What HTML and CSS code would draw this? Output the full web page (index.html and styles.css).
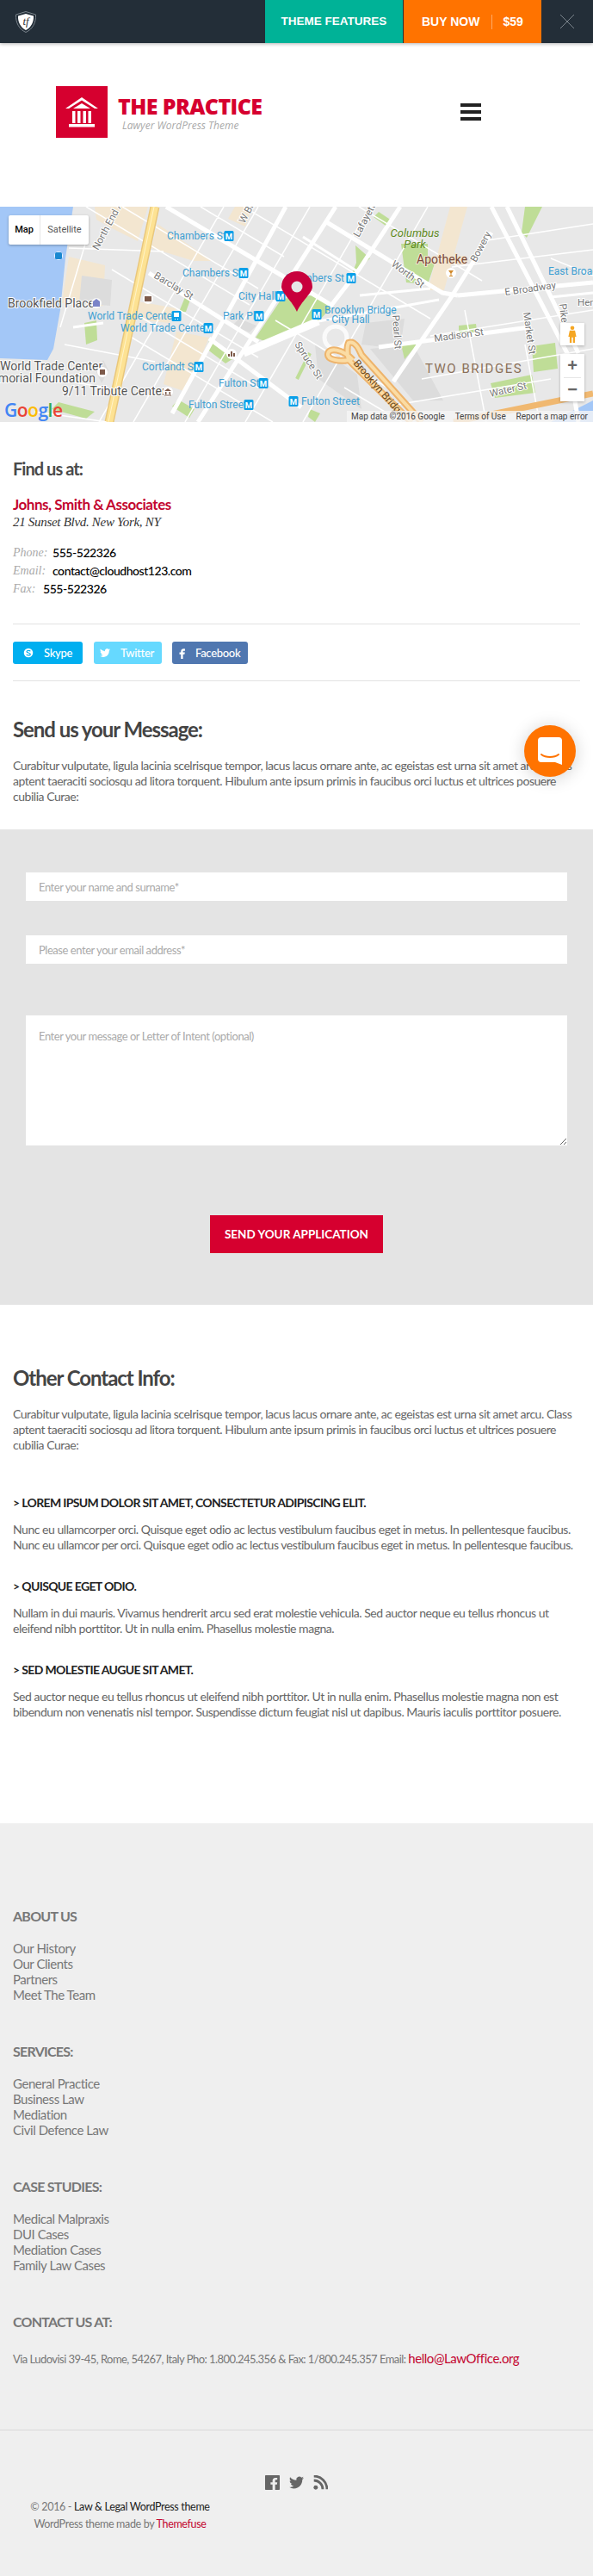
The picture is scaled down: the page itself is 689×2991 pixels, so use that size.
FILE: index.html
```html
<!DOCTYPE html>
<html lang="en">
<head>
    <meta charset="UTF-8">
    <title>Contact - The Practice</title>
    <link rel="stylesheet" href="styles.css">
</head>
<body>
    <!-- Theme preview bar -->
    <div class="topbar">
        <svg class="shield" viewBox="0 0 24 25" width="24" height="25">
            <path d="M12 .5 23.5 4C24 13 20 21 12 24.5 4 21 0 13 .5 4Z" fill="none" stroke="#7b848c" stroke-width="1"/>
            <path d="M12 3 21 5.500C21.500 12.500 18 19 12 22 6 19 2.500 12.500 3 5.500Z" fill="#fff"/>
            <text x="12" y="16" class="shield-text">tf</text>
        </svg>
        <a class="bar-link bar-features">THEME FEATURES</a>
        <a class="bar-link bar-buy"><span class="buy-now">BUY NOW</span><span class="buy-price">$59</span></a>
        <svg class="bar-close" viewBox="0 0 16 16" width="16" height="16">
            <path d="M0 0 16 16M16 0 0 16" stroke="#7b848c" stroke-width="1" fill="none"/>
        </svg>
    </div>

    <!-- Logo and menu -->
    <header class="header">
        <div class="logo-mark">
            <svg viewBox="0 0 60 60" width="60" height="60">
                <path d="M30 13 49 26H45L30 16.500 15 26H11Z" fill="#fff"/>
                <path d="M30 20 40 26H20Z" fill="#fff"/>
                <path d="M19 29h3.500v14H19zM25 29h3.500v14H25zM31.500 29H35v14h-3.500zM37.500 29H41v14h-3.500zM15 44h30v3.500H15z" fill="#fff"/>
            </svg>
        </div>
        <div class="logo-text">
            <div class="logo-title">THE PRACTICE</div>
            <div class="logo-sub">Lawyer WordPress Theme</div>
        </div>
        <div class="burger"><span></span><span></span><span></span></div>
    </header>

    <!-- Map -->
    <div class="map">
        <svg class="map-svg" viewBox="0 0 689 250" width="689" height="250">
            <defs>
                <g id="m-badge">
                    <rect x="-5.500" y="-6" width="11" height="12" rx="1.500" fill="#0a9fe8"/>
                    <text y="3.500" class="m-letter">M</text>
                </g>
            </defs>
            <rect width="689" height="250" fill="#e8e8e8"/>

            <!-- water -->
            <path d="M0 0H85L76 60 70 120 62 165 55 178 0 176Z" fill="#a3c7f7"/>
            <path d="M689 225V250H640Z" fill="#a3c7f7"/>

            <!-- land use -->
            <g fill="#f3e6d0">
                <path d="M183 20 247 63 225 63 176 48Z"/>
                <path d="M273 0H293L285 23 265 14Z"/>
                <path d="M110 0H172L160 40 130 25 112 15Z"/>
                <path d="M80 58 122 68 120 115 72 112Z"/>
                <path d="M205 145 243 152 216 215 190 206Z"/>
                <path d="M523 0H543L516 97 497 97Z"/>
                <path d="M160 110 205 118 196 135 150 130Z"/>
            </g>
            <g fill="#dcdcdc">
                <path d="M95 80 130 85 128 115 92 112Z"/>
                <path d="M278 130 298 138 290 146 270 138Z"/>
                <path d="M425 135 470 130 465 165 420 160Z"/>
                <path d="M366 160 415 195 420 235 370 200Z"/>
                <path d="M430 165 480 160 515 225 480 225Z"/>
                <path d="M120 178 126 190 118 205 112 192Z"/>
            </g>
            <g fill="#bfdd97">
                <path d="M327 107 297 152 307 156 370 133 387 115 363 103Z"/>
                <path d="M466 43H497V60L505 66 497 90 472 88Z"/>
                <path d="M413 45 430 60 408 80 414 65Z"/>
                <path d="M244 153 273 175 262 182 240 165Z"/>
                <path d="M207 224 226 235 220 245 200 232Z"/>
                <path d="M466 160H485L470 177Z"/>
                <path d="M533 138 553 136 555 150 533 152Z"/>
                <path d="M618 162 645 158 648 188 620 192Z"/>
                <path d="M570 205 618 195 622 216 575 222Z"/>
                <path d="M68 227 110 238 100 246 60 235Z"/>
                <path d="M98 135 112 132 113 155 100 160Z"/>
                <path d="M215 105 224 100 216 122 208 122Z"/>
                <path d="M440 6 455 16 448 22 434 12Z"/>
                <path d="M610 0H630L612 36 606 30Z"/>
                <path d="M360 235 372 240 366 250 358 244Z"/>
            </g>
            <path d="M345 200 360 170" stroke="#bfdd97" stroke-width="4" fill="none"/>

            <!-- small streets -->
            <path class="road-thin" d="M417 0 560 86M283 0 500 130M233 0 330 58M142 0 300 95M100 0 290 114M130 73 300 175M160 126 300 210M150 150 317 250M320 132 460 216M400 210 467 250M300 0 155 250M360 0 215 250M430 0 285 250M497 0 352 250M260 0 115 250M500 150 689 120M460 230 640 200M560 40 689 20M610 160 625 240M490 200 689 165M525 70 689 50M80 48 190 52M40 238 125 250M100 40 70 140M75 160 180 180M60 200 125 210M540 120 565 250M640 60 689 80"/>
            <path class="road-mid" d="M640 105 689 100M85 140 120 135M352 35 415 75M418 103 500 95M370 133 510 108"/>
            <!-- main streets -->
            <path class="road-main" d="M193 0 383 113M378 17 514 100 532 103M173 77 300 157M243 153 350 233M332 0 200 240M390 0 283 167 230 250M465 0 417 73 383 117M571 30 523 107 457 203M532 103 689 88M440 163 615 140M571 0 659 170 672 250M589 0 672 170"/>
            <path class="road-wide" d="M370 133 283 170"/>
            <circle cx="390" cy="152" r="13" fill="none" stroke="#fafafa" stroke-width="5"/>

            <!-- highway -->
            <path d="M180 0 127 250" stroke="#e9c77c" stroke-width="11" fill="none"/>
            <path d="M180 0 127 250" stroke="#fde293" stroke-width="8" fill="none"/>
            <path d="M179 0 126 250" stroke="#fff3c9" stroke-width="1" fill="none"/>
            <path d="M527 250 689 217" stroke="#f0b870" stroke-width="7" fill="none"/>
            <path class="ramp-edge" d="M478 250 405 178C395 180 380 178 381 171 382 163 398 165 410 178M490 250 420 172C415 160 410 156 405 158 403 162 403 172 405 178"/>
            <path class="ramp-fill" d="M478 250 405 178C395 180 380 178 381 171 382 163 398 165 410 178M490 250 420 172C415 160 410 156 405 158 403 162 403 172 405 178"/>

            <!-- transit labels -->
            <g class="label-blue">
                <text x="194" y="38">Chambers St</text>
                <text x="212" y="81">Chambers St</text>
                <text x="400" y="87" text-anchor="end">Chambers St</text>
                <text x="277" y="108">City Hall</text>
                <text x="377" y="124">Brooklyn Bridge</text>
                <text x="379" y="135">- City Hall</text>
                <text x="259" y="131">Park Pl</text>
                <text x="102" y="131">World Trade Center</text>
                <text x="140" y="145">World Trade Center</text>
                <text x="165" y="190">Cortlandt St</text>
                <text x="254" y="209">Fulton St</text>
                <text x="219" y="234">Fulton Street</text>
                <text x="350" y="230">Fulton Street</text>
                <text x="637" y="79">East Broadway</text>
            </g>
            <use href="#m-badge" x="266" y="34"/>
            <use href="#m-badge" x="283" y="77"/>
            <use href="#m-badge" x="408" y="83"/>
            <use href="#m-badge" x="326" y="104"/>
            <use href="#m-badge" x="368" y="125"/>
            <use href="#m-badge" x="301" y="127"/>
            <use href="#m-badge" x="242" y="141"/>
            <use href="#m-badge" x="231" y="186"/>
            <use href="#m-badge" x="306" y="205"/>
            <use href="#m-badge" x="289" y="230"/>
            <use href="#m-badge" x="341" y="226"/>
            <rect x="199.500" y="121" width="11" height="12" rx="1.500" fill="#0a9fe8"/>
            <path d="M202 123h6v5h-6zM203 130h1v1h-1zM206 130h1v1h-1z" fill="#fff"/>

            <!-- place labels -->
            <g class="label-dark">
                <text x="9" y="117">Brookfield Place</text>
                <text x="0" y="190">World Trade Center</text>
                <text x="111" y="204" text-anchor="end">Memorial Foundation</text>
                <text x="72" y="219">9/11 Tribute Center</text>
            </g>
            <g class="label-street">
                <text transform="translate(114 51) rotate(-62)">North End Ave</text>
                <text transform="translate(284 20) rotate(-62)">W Broadway</text>
                <text transform="translate(417 36) rotate(-62)">Lafayette</text>
                <text transform="translate(553 65) rotate(-62)">Bowery</text>
                <text transform="translate(454 68) rotate(37)">Worth St</text>
                <text transform="translate(178 82) rotate(31)">Barclay St</text>
                <text transform="translate(342 160) rotate(57)">Spruce St</text>
                <text transform="translate(456 126) rotate(86)">Pearl St</text>
                <text transform="translate(608 123) rotate(82)">Market St</text>
                <text transform="translate(650 113) rotate(84)">Pike</text>
                <text transform="translate(570 221) rotate(-13)">Water St</text>
                <text transform="translate(505 157) rotate(-8)">Madison St</text>
                <text transform="translate(587 103) rotate(-8)">E Broadway</text>
                <text x="671" y="115">Henry</text>
            </g>
            <text class="label-ramp" transform="translate(410 182) rotate(49)">Brooklyn Bridge</text>
            <text class="label-park" x="482" y="35" text-anchor="middle">Columbus</text>
            <text class="label-park" x="482" y="48" text-anchor="middle">Park</text>
            <text class="label-shop" x="484" y="66">Apotheke</text>
            <text class="label-area" x="494" y="193">TWO BRIDGES</text>

            <!-- point markers -->
            <circle cx="68" cy="57" r="5" fill="#fff" opacity=".8"/>
            <rect x="64" y="53" width="8" height="8" rx="1.500" fill="#1a88d0"/>
            <circle cx="112" cy="112" r="6" fill="#fff" opacity=".8"/>
            <path d="M112 107 116 110V116H108V110Z" fill="#7a84c8"/>
            <circle cx="172" cy="107" r="6" fill="#fff"/>
            <path d="M168 104h8v6h-8z" fill="#7d5a4a"/>
            <circle cx="269" cy="171" r="6" fill="#fff"/>
            <path d="M265 174v-3h2v3zM268 174v-6h2v6zM271 174v-4h2v4z" fill="#7d5a4a"/>
            <circle cx="119" cy="192" r="6" fill="#fff"/>
            <rect x="116" y="189" width="6" height="6" fill="#7d5a4a"/>
            <circle cx="195" cy="215" r="6" fill="#fff"/>
            <path d="M195 211 199 214H191ZM192 215h1.500v3H192zM196.500 215H198v3h-1.500zM191 218.500h8v1h-8z" fill="#7d5a4a"/>
            <circle cx="524" cy="77" r="6" fill="#fff"/>
            <path d="M521 74h6l-2.500 3.500v2.500h1.500v1h-4v-1h1.500v-2.500Z" fill="#d18a2c"/>

            <!-- pin -->
            <path d="M345 122C340 110 327 100 327 93A18 18 0 1 1 363 93C363 100 350 110 345 122Z" fill="#c8003c"/>
            <circle cx="345" cy="93" r="6.500" fill="#e6e6e6"/>

            <text class="google" x="5" y="244"><tspan fill="#4285f4">G</tspan><tspan fill="#ea4335">o</tspan><tspan fill="#fbbc05">o</tspan><tspan fill="#4285f4">g</tspan><tspan fill="#34a853">l</tspan><tspan fill="#ea4335">e</tspan></text>
        </svg>

        <div class="map-type"><span class="map-type-on">Map</span><span class="map-type-off">Satellite</span></div>
        <div class="pegman">
            <svg viewBox="0 0 12 26" width="12" height="26">
                <circle cx="6" cy="3.500" r="3" fill="#f5a623"/>
                <path d="M2 7.500H10L12 17H10V26H7V18H5V26H2V17H0Z" fill="#f5a623"/>
            </svg>
        </div>
        <div class="map-zoom"><span>+</span><i></i><span>&minus;</span></div>
        <div class="map-credit"><span>Map data &copy;2016 Google</span><span>Terms of Use</span><span>Report a map error</span></div>
    </div>

    <!-- Contact details -->
    <section class="find-us">
        <h3>Find us at:</h3>
        <div class="company">Johns, Smith &amp; Associates</div>
        <div class="address">21 Sunset Blvd. New York, NY</div>
        <ul class="contact-lines">
            <li><em>Phone:</em><span class="wide">555-522326</span></li>
            <li><em>Email:</em><span class="wide">contact@cloudhost123.com</span></li>
            <li><em>Fax:</em><span>555-522326</span></li>
        </ul>
        <div class="social-row">
            <a class="social skype">
                <svg viewBox="0 0 24 24" width="14" height="14">
                    <path d="M12 3A9 9 0 0 1 21 12 9 9 0 0 1 12 21 9 9 0 0 1 3 12 9 9 0 0 1 12 3Z" fill="#fff"/>
                    <path d="M16 9C15 7 9 6.500 8.500 9.500 8.500 12.500 16 11.500 16 15 15 18 9 17 8 15" fill="none" stroke="#00aff0" stroke-width="2"/>
                </svg>
                Skype
            </a>
            <a class="social twitter">
                <svg viewBox="0 0 24 24" width="12" height="12">
                    <path fill="#fff" d="M23.953 4.570a10 10 0 01-2.825.775 4.958 4.958 0 002.163-2.723c-.951.555-2.005.959-3.127 1.184a4.920 4.920 0 00-8.384 4.482C7.690 8.095 4.067 6.130 1.640 3.162a4.822 4.822 0 00-.666 2.475c0 1.710.870 3.213 2.188 4.096a4.904 4.904 0 01-2.228-.616v.060a4.923 4.923 0 003.946 4.827 4.996 4.996 0 01-2.212.085 4.936 4.936 0 004.604 3.417 9.867 9.867 0 01-6.102 2.105c-.390 0-.779-.023-1.170-.067a13.995 13.995 0 007.557 2.209c9.053 0 13.998-7.496 13.998-13.985 0-.210 0-.420-.015-.630A9.935 9.935 0 0024 4.590z"/>
                </svg>
                Twitter
            </a>
            <a class="social facebook">
                <svg viewBox="0 0 24 24" width="14" height="14">
                    <path fill="#fff" d="M14 8h3V4h-3c-2.800 0-5 2.200-5 5v2H6v4h3v9h4v-9h3l1-4h-4V9c0-.6.4-1 1-1z"/>
                </svg>
                Facebook
            </a>
        </div>
    </section>

    <section class="message">
        <h2>Send us your Message:</h2>
        <p>Curabitur vulputate, ligula lacinia scelrisque tempor, lacus lacus ornare ante, ac egeistas est urna sit amet arcu. Class aptent taeraciti sociosqu ad litora torquent. Hibulum ante ipsum primis in faucibus orci luctus et ultrices posuere cubilia Curae:</p>
    </section>

    <!-- Form -->
    <form class="contact-form">
        <input type="text" placeholder="Enter your name and surname*">
        <input type="text" class="email-field" placeholder="Please enter your email address*">
        <textarea placeholder="Enter your message or Letter of Intent (optional)"></textarea>
        <button type="button">SEND YOUR APPLICATION</button>
    </form>

    <section class="other-info">
        <h2>Other Contact Info:</h2>
        <p class="intro">Curabitur vulputate, ligula lacinia scelrisque tempor, lacus lacus ornare ante, ac egeistas est urna sit amet arcu. Class aptent taeraciti sociosqu ad litora torquent. Hibulum ante ipsum primis in faucibus orci luctus et ultrices posuere cubilia Curae:</p>
        <h4>&gt; Lorem ipsum dolor sit amet, consectetur adipiscing elit.</h4>
        <p>Nunc eu ullamcorper orci. Quisque eget odio ac lectus vestibulum faucibus eget in metus. In pellentesque faucibus. Nunc eu ullamcor per orci. Quisque eget odio ac lectus vestibulum faucibus eget in metus. In pellentesque faucibus.</p>
        <h4>&gt; Quisque eget odio.</h4>
        <p>Nullam in dui mauris. Vivamus hendrerit arcu sed erat molestie vehicula. Sed auctor neque eu tellus rhoncus ut eleifend nibh porttitor. Ut in nulla enim. Phasellus molestie magna.</p>
        <h4>&gt; Sed molestie augue sit amet.</h4>
        <p>Sed auctor neque eu tellus rhoncus ut eleifend nibh porttitor. Ut in nulla enim. Phasellus molestie magna non est bibendum non venenatis nisl tempor. Suspendisse dictum feugiat nisl ut dapibus. Mauris iaculis porttitor posuere.</p>
    </section>

    <!-- Footer -->
    <footer class="footer">
        <div class="footer-top">
            <div class="footer-col">
                <h5>About us</h5>
                <a>Our History</a>
                <a>Our Clients</a>
                <a>Partners</a>
                <a>Meet The Team</a>
            </div>
            <div class="footer-col">
                <h5>Services:</h5>
                <a>General Practice</a>
                <a>Business Law</a>
                <a>Mediation</a>
                <a>Civil Defence Law</a>
            </div>
            <div class="footer-col">
                <h5>Case studies:</h5>
                <a>Medical Malpraxis</a>
                <a>DUI Cases</a>
                <a>Mediation Cases</a>
                <a>Family Law Cases</a>
            </div>
            <div class="footer-col">
                <h5>Contact us at:</h5>
                <p class="footer-address">Via Ludovisi 39-45, Rome, 54267, Italy Pho: 1.800.245.356 &amp; Fax: 1/800.245.357 Email: <a class="footer-mail">hello@LawOffice.org</a></p>
            </div>
        </div>
        <div class="footer-bottom">
            <div class="footer-icons">
                <svg viewBox="0 0 24 24" width="17" height="17">
                    <path fill="#666" d="M1 0h22a1 1 0 011 1v22a1 1 0 01-1 1h-6.500v-9h3l.5-3.500h-3.500V9c0-1 .5-1.700 1.800-1.700H20V4.200h-3c-3 0-4.800 1.800-4.800 4.500v2.800H9V15h3.200v9H1a1 1 0 01-1-1V1a1 1 0 011-1z"/>
                </svg>
                <svg viewBox="0 0 24 24" width="17" height="17">
                    <path fill="#666" d="M23.953 4.570a10 10 0 01-2.825.775 4.958 4.958 0 002.163-2.723c-.951.555-2.005.959-3.127 1.184a4.920 4.920 0 00-8.384 4.482C7.690 8.095 4.067 6.130 1.640 3.162a4.822 4.822 0 00-.666 2.475c0 1.710.870 3.213 2.188 4.096a4.904 4.904 0 01-2.228-.616v.060a4.923 4.923 0 003.946 4.827 4.996 4.996 0 01-2.212.085 4.936 4.936 0 004.604 3.417 9.867 9.867 0 01-6.102 2.105c-.390 0-.779-.023-1.170-.067a13.995 13.995 0 007.557 2.209c9.053 0 13.998-7.496 13.998-13.985 0-.210 0-.420-.015-.630A9.935 9.935 0 0024 4.590z"/>
                </svg>
                <svg viewBox="0 0 24 24" width="17" height="17">
                    <circle cx="4" cy="20" r="3.500" fill="#666"/>
                    <path d="M1 8.500A14.500 14.500 0 0 1 15.500 23M1 1.500A21.500 21.500 0 0 1 22.500 23" fill="none" stroke="#666" stroke-width="4"/>
                </svg>
            </div>
            <div class="copyright">
                <div>&copy; 2016 - <span class="dark">Law &amp; Legal WordPress theme</span></div>
                <div>WordPress theme made by <span class="red">Themefuse</span></div>
            </div>
        </div>
    </footer>

    <!-- Chat launcher -->
    <div class="chat">
        <svg viewBox="0 0 28 32" width="28" height="32">
            <path d="M4 0H24A4 4 0 0 1 28 4V32L20 29H4A4 4 0 0 1 0 25V4A4 4 0 0 1 4 0Z" fill="#fff"/>
            <path d="M4 20C9 24 19 24 24 20" fill="none" stroke="#ff7300" stroke-width="2" stroke-linecap="round"/>
        </svg>
    </div>
</body>
</html>
```

FILE: styles.css
```css
* {
    box-sizing: border-box;
}

body {
    margin: 0;
    background: #fff;
    color: #666;
    font-family: Lato, "Open Sans", sans-serif;
    font-size: 14px;
    line-height: 18px;
    letter-spacing: -0.47px;
    position: relative;
}

/* Top bar */
.topbar {
    display: flex;
    align-items: center;
    height: 50px;
    background: #232e38;
    box-shadow: 0 1px 4px rgba(0, 0, 0, 0.3);
    position: relative;
    letter-spacing: 0;
}

.shield {
    margin-left: 18px;
    margin-right: 266px;
}

.shield-text {
    font-family: "Liberation Serif", serif;
    font-style: italic;
    font-size: 13px;
    fill: #333;
    text-anchor: middle;
}

.bar-link {
    display: flex;
    align-items: center;
    width: 160px;
    height: 50px;
    color: #fff;
    font-family: "Liberation Sans", Arial, sans-serif;
    font-size: 14px;
    font-weight: bold;
}

.bar-features {
    background: #00b297;
    margin-right: 1px;
    justify-content: center;
    font-size: 13.500px;
}

.bar-buy {
    background: #ff7300;
    padding-left: 21px;
}

.buy-now {
    padding-right: 14px;
    border-right: 1px solid #ffab66;
    height: 17px;
    line-height: 17px;
}

.buy-price {
    padding-left: 12px;
}

.bar-close {
    margin-left: 22px;
}

/* Header */
.header {
    display: flex;
    height: 190px;
    padding: 50px 0 0 65px;
    letter-spacing: 0;
}

.logo-mark {
    width: 60px;
    height: 60px;
    background: #d6002f;
}

.logo-text {
    margin-left: 12px;
    padding-top: 8px;
    width: 180px;
}

.logo-title {
    font-family: "Open Sans", sans-serif;
    font-weight: 800;
    font-size: 25px;
    line-height: 30px;
    color: #d6002f;
    letter-spacing: -0.6px;
    white-space: nowrap;
}

.logo-sub {
    margin-left: 5px;
    font-family: "Open Sans", sans-serif;
    font-style: italic;
    font-size: 12px;
    line-height: 16px;
    color: #aaa;
    white-space: nowrap;
}

.burger {
    margin-left: 218px;
    margin-top: 20px;
    display: flex;
    flex-direction: column;
    gap: 4px;
    width: 24px;
}

.burger span {
    height: 4px;
    background: #222;
}

/* Map */
.map {
    position: relative;
    height: 250px;
    overflow: hidden;
    letter-spacing: 0;
}

.map-svg {
    display: block;
}

.road-thin,
.road-mid,
.road-main,
.road-wide {
    fill: none;
    stroke: #fff;
}

.road-thin { stroke-width: 1.5; }
.road-mid { stroke-width: 3; }
.road-main { stroke-width: 5; }
.road-wide { stroke-width: 9; }

.ramp-edge {
    fill: none;
    stroke: #eeb46c;
    stroke-width: 8;
}

.ramp-fill {
    fill: none;
    stroke: #fbdca4;
    stroke-width: 4;
}

.m-letter {
    font-family: Roboto, sans-serif;
    font-size: 9.500px;
    font-weight: bold;
    fill: #fff;
    text-anchor: middle;
}

.label-blue text {
    font-family: Roboto, sans-serif;
    font-size: 12px;
    fill: #3f9fd3;
}

.label-dark text {
    font-family: Roboto, sans-serif;
    font-size: 14px;
    fill: #555;
    stroke: #fff;
    stroke-width: 2px;
    paint-order: stroke;
}

.label-street text {
    font-family: Roboto, sans-serif;
    font-size: 11.500px;
    fill: #777;
    stroke: #fff;
    stroke-width: 2px;
    paint-order: stroke;
}

.label-ramp {
    font-family: Roboto, sans-serif;
    font-size: 12px;
    fill: #6b4a22;
}

.label-park {
    font-family: Roboto, sans-serif;
    font-style: italic;
    font-size: 13px;
    fill: #5e8a1c;
}

.label-shop {
    font-family: Roboto, sans-serif;
    font-size: 14px;
    fill: #7a4a3a;
    stroke: #f3e6d0;
    stroke-width: 2px;
    paint-order: stroke;
}

.label-area {
    font-family: Roboto, sans-serif;
    font-size: 15px;
    letter-spacing: 1.500px;
    fill: #8b7059;
}

.google {
    font-family: "Open Sans", sans-serif;
    font-size: 21px;
    font-weight: 600;
    letter-spacing: -0.5px;
}

.map-type {
    position: absolute;
    left: 10px;
    top: 10px;
    display: flex;
    height: 34px;
    background: #fff;
    border-radius: 2px;
    box-shadow: 0 1px 3px rgba(0, 0, 0, 0.3);
    font-family: Roboto, sans-serif;
    font-size: 11px;
    line-height: 34px;
}

.map-type-on {
    width: 37px;
    text-align: center;
    color: #000;
    font-weight: 500;
    border-right: 1px solid #e6e6e6;
}

.map-type-off {
    width: 56px;
    text-align: center;
    color: #565656;
}

.pegman {
    position: absolute;
    left: 651px;
    top: 135px;
    width: 28px;
    height: 26px;
    background: #fff;
    display: flex;
    align-items: center;
    justify-content: center;
    box-shadow: 0 1px 3px rgba(0, 0, 0, 0.25);
}

.pegman svg {
    height: 20px;
}

.map-zoom {
    position: absolute;
    left: 651px;
    top: 171px;
    width: 28px;
    height: 55px;
    background: #fff;
    box-shadow: 0 1px 3px rgba(0, 0, 0, 0.25);
    display: flex;
    flex-direction: column;
    font-family: "Liberation Sans", sans-serif;
    font-size: 20px;
    font-weight: bold;
    color: #666;
    text-align: center;
    line-height: 27px;
}

.map-zoom span {
    height: 27px;
}

.map-zoom i {
    display: block;
    height: 1px;
    margin: 0 4px;
    background: #e6e6e6;
}

.map-credit {
    position: absolute;
    right: 0;
    bottom: 0;
    height: 13px;
    width: 286px;
    padding: 0 6px 0 5px;
    display: flex;
    justify-content: space-between;
    background: rgba(245, 245, 245, 0.8);
    font-family: Roboto, sans-serif;
    font-size: 10px;
    line-height: 13px;
    color: #444;
}

/* Find us */
.find-us {
    padding: 42px 15px 0;
}

h3 {
    margin: 0;
    font-size: 20px;
    line-height: 24px;
    letter-spacing: -0.95px;
    color: #4a4a4a;
    font-weight: bold;
}

.company {
    margin-top: 19px;
    font-size: 17px;
    line-height: 22px;
    font-weight: bold;
    color: #c3062f;
}

.address {
    font-family: "Liberation Serif", serif;
    font-style: italic;
    font-size: 15px;
    line-height: 18px;
    letter-spacing: -0.3px;
    color: #333;
}

.contact-lines {
    list-style: none;
    margin: 16px 0 0;
    padding: 0 0 30px;
    border-bottom: 1px solid #e2e2e2;
}

.contact-lines li {
    display: flex;
    height: 21px;
    line-height: 21px;
    color: #000;
    font-size: 14px;
    font-weight: 500;
    letter-spacing: -0.45px;
}

.contact-lines em {
    width: 35px;
    font-family: "Liberation Serif", serif;
    font-size: 14px;
    font-weight: normal;
    letter-spacing: 0;
    color: #aaa;
}

.contact-lines .wide {
    margin-left: 11px;
}

.social-row {
    display: flex;
    gap: 13px;
    padding: 20px 0 19px;
    border-bottom: 1px solid #e2e2e2;
}

.social {
    display: flex;
    align-items: center;
    height: 26px;
    border-radius: 3px;
    color: #fff;
    font-size: 13px;
    font-weight: 500;
    letter-spacing: -0.3px;
}

.skype {
    width: 81px;
    background: #00aff0;
    padding-left: 11px;
    gap: 11px;
}

.twitter {
    width: 79px;
    background: #66d9ff;
    padding-left: 7px;
    gap: 12px;
}

.facebook {
    width: 88px;
    background: #5077b0;
    padding-left: 5px;
    gap: 8px;
    margin-left: -1px;
}

/* Message intro */
.message {
    padding: 41px 15px 0;
    height: 172px;
}

h2 {
    margin: 0;
    font-size: 24px;
    line-height: 30px;
    letter-spacing: -1.05px;
    color: #444;
    font-weight: bold;
}

.message p {
    margin: 18px 0 0;
}

/* Form */
.contact-form {
    height: 552px;
    background: #e4e4e4;
    padding: 50px 30px 0;
    display: flex;
    flex-direction: column;
}

.contact-form input,
.contact-form textarea {
    display: block;
    width: 100%;
    border: none;
    border-radius: 0;
    background: #fff;
    padding: 0 15px;
    margin: 0;
    font-family: Lato, sans-serif;
    font-size: 13px;
    letter-spacing: -0.45px;
    color: #333;
    outline: none;
}

.contact-form input::placeholder,
.contact-form textarea::placeholder {
    color: #aaa;
    opacity: 1;
}

.contact-form input {
    height: 33px;
}

.contact-form .email-field {
    margin-top: 40px;
}

.contact-form textarea {
    margin-top: 60px;
    height: 151px;
    padding-top: 15px;
    line-height: 18px;
}

.contact-form button {
    align-self: center;
    margin-top: 81px;
    width: 201px;
    height: 44px;
    border: none;
    background: #d6002f;
    color: #fff;
    font-family: Lato, sans-serif;
    font-size: 13.500px;
    font-weight: bold;
    letter-spacing: 0;
}

/* Other contact info */
.other-info {
    padding: 70px 15px 0;
    height: 602px;
}

.other-info p {
    margin: 0;
}

.other-info .intro {
    margin-top: 18px;
    margin-bottom: 49px;
}

h4 {
    margin: 0 0 13px;
    font-size: 14px;
    line-height: 18px;
    letter-spacing: -0.65px;
    font-weight: bold;
    color: #222;
    text-transform: uppercase;
}

.other-info p + h4 {
    margin-top: 30px;
}

.other-info .intro + h4 {
    margin-top: 0;
}

/* Footer */
.footer {
    background: #efefef;
    height: 874px;
    color: #777;
}

.footer-top {
    padding: 97px 15px 0;
    height: 705px;
    border-bottom: 1px solid #d9d9d9;
}

.footer-col {
    height: 157px;
}

h5 {
    margin: 0 0 17px;
    font-size: 16px;
    line-height: 22px;
    letter-spacing: -0.75px;
    font-weight: bold;
    color: #777;
    text-transform: uppercase;
}

.footer-col > a {
    display: block;
    font-size: 15px;
    line-height: 18px;
    letter-spacing: -0.45px;
}

.footer-address {
    margin: 0;
    font-size: 13px;
    line-height: 20px;
    letter-spacing: -0.55px;
    padding-top: 4px;
}

.footer-mail {
    font-size: 15px;
    letter-spacing: -0.45px;
    color: #c3062f;
}

.footer-bottom {
    padding-top: 52px;
}

.footer-icons {
    display: flex;
    justify-content: center;
    gap: 11px;
}

.copyright {
    width: 279px;
    margin-top: 10px;
    text-align: center;
    font-size: 12.500px;
    line-height: 20px;
    letter-spacing: -0.33px;
    color: #777;
}

.dark {
    color: #222;
}

.red {
    color: #c3062f;
}

/* Chat launcher */
.chat {
    position: absolute;
    left: 609px;
    top: 842px;
    width: 60px;
    height: 60px;
    border-radius: 50%;
    background: #ff7300;
    display: flex;
    align-items: center;
    justify-content: center;
    box-shadow: 0 2px 20px rgba(0, 0, 0, 0.18);
}
```
